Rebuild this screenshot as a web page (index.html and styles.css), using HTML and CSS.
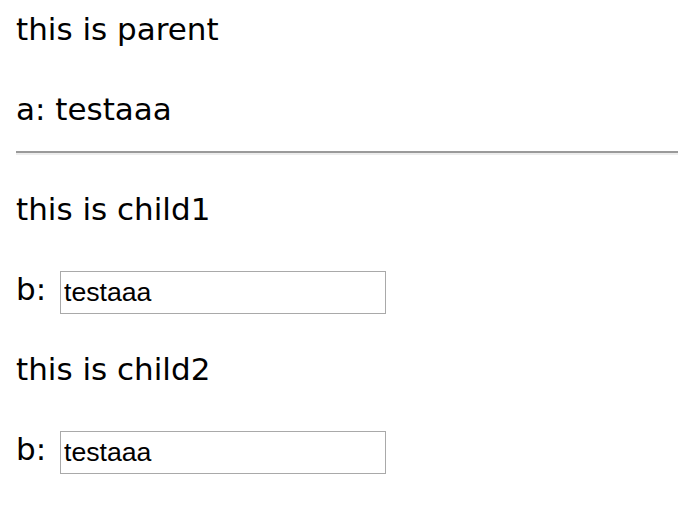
FILE: index.html
```html
<!DOCTYPE html>
<html lang="en">
<head>
<meta charset="UTF-8" />
<title>parent / child</title>
<link rel="stylesheet" href="styles.css">
</head>
<body>
  <div class="parent">
    <p>this is parent</p>
    <p>a: testaaa</p>
  </div>
  <hr>
  <div class="child">
    <p>this is child1</p>
    <p>b: <input type="text" value="testaaa"></p>
  </div>
  <div class="child">
    <p>this is child2</p>
    <p>b: <input type="text" value="testaaa"></p>
  </div>
</body>
</html>
```

FILE: styles.css
```css
body {
  margin: 0;
  padding: 5px 0 0 16px;
  background: #fff;
  color: #000;
  font-family: 'DejaVu Sans', Verdana, sans-serif;
  font-size: 31px;
  line-height: 48px;
}
p {
  height: 48px;
  margin: 0 0 32px;
}
.parent p:last-child {
  margin-bottom: 0;
}
hr {
  height: 0;
  margin: 18px 0 30px;
  border: 0;
  border-top: 2px solid #9a9a9a;
  border-bottom: 2px solid #ededed;
}
input {
  box-sizing: border-box;
  width: 326px;
  height: 43px;
  margin: 0 0 0 4px;
  padding: 0 3px;
  border: 1px solid #a9a9a9;
  font-family: 'Liberation Sans', Arial, sans-serif;
  font-size: 26.67px;
  color: #000;
  background: #fff;
  vertical-align: -1px;
}
```
